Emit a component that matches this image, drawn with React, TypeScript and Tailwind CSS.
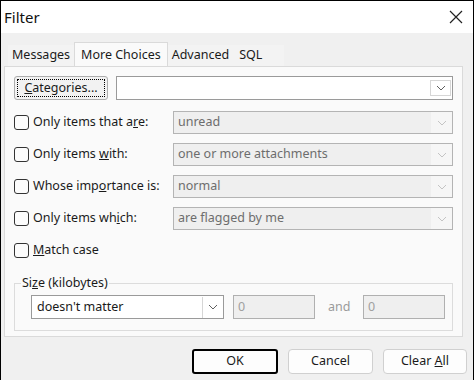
import type { ReactNode } from 'react';

const FONT = { fontFamily: '"Noto Sans", "Open Sans", Arial, sans-serif' };

function Chevron({ light = false }: { light?: boolean }) {
  return (
    <svg width="10" height="6" viewBox="0 0 10 6" fill="none">
      <path d="M1 1l4 4 4-4" stroke={light ? '#c4c4c4' : '#606060'} strokeWidth="1" />
    </svg>
  );
}

function Checkbox() {
  return <span className="h-[15px] w-[15px] shrink-0 rounded-[3px] border border-[#333] bg-[#fcfcfc]" />;
}

function DisabledSelect({ value }: { value: string }) {
  return (
    <div className="flex h-[23px] flex-1 items-center border border-[#b4b4b4] bg-[#efefef] pl-[4px] text-[#6d6d6d]">
      <span className="flex-1">{value}</span>
      <span className="flex h-[21px] w-[21px] items-center justify-center bg-[#f6f6f6]">
        <Chevron light />
      </span>
    </div>
  );
}

function CheckRow({ label, value }: { label: ReactNode; value: string }) {
  return (
    <div className="flex h-[23px] items-center">
      <div className="flex w-[159px] items-center gap-[4px]">
        <Checkbox />
        <span className="text-[#1a1a1a]">{label}</span>
      </div>
      <DisabledSelect value={value} />
    </div>
  );
}

function Tab({ children, selected = false, extra = '' }: { children: ReactNode; selected?: boolean; extra?: string }) {
  return selected ? (
    <div className="-mb-px flex h-[25px] items-center border border-b-0 border-[#dadada] bg-[#fafafa] px-[6px] text-[#1a1a1a]">
      {children}
    </div>
  ) : (
    <div className={`flex h-[21px] items-center bg-[#f3f3f3] pl-[4px] text-[#1a1a1a] ${extra}`}>{children}</div>
  );
}

export default function App() {
  return (
    <div
      className="flex h-[380px] w-[474px] flex-col overflow-hidden border-x border-t border-black bg-[#f0f0f0] text-[12.5px]"
      style={FONT}
    >
      <div className="flex h-[32px] shrink-0 items-center justify-between bg-white pl-[3px] pr-[10px]">
        <span className="text-[15px] text-[#111]">Filter</span>
        <svg width="14" height="14" viewBox="0 0 14 14">
          <path d="M1 1l12 12M13 1L1 13" stroke="#222" strokeWidth="1.2" />
        </svg>
      </div>

      <div className="flex items-end pl-[7px] pt-[9px]">
        <Tab extra="pr-[4px]">Messages</Tab>
        <Tab selected>More Choices</Tab>
        <Tab extra="pr-[6px]">Advanced</Tab>
        <Tab extra="pr-[22px]">SQL</Tab>
      </div>

      <div className="ml-[3px] mr-[10px] flex h-[271px] flex-col border border-[#dadada] bg-[#fafafa] px-[9px] pt-[9px]">
        <div className="flex h-[24px] items-center gap-[8px]">
          <button className="flex h-[24px] w-[94px] items-center justify-center rounded-[3px] border border-[#adadad] bg-[#f2f2f2] p-[2px] text-[#1a1a1a]">
            <span className="flex h-full w-full items-center justify-center border border-dotted border-black">
              <span>
                <u>C</u>ategories...
              </span>
            </span>
          </button>
          <div className="flex h-[24px] flex-1 items-center justify-end border border-[#9a9a9a] bg-white pr-[1px]">
            <span className="flex h-[16px] w-[21px] items-center justify-center border border-[#d6d6d6]">
              <Chevron />
            </span>
          </div>
        </div>

        <div className="mt-[11px] flex flex-col gap-[9px]">
          <CheckRow
            label={
              <>
                Only items that a<u>r</u>e:
              </>
            }
            value="unread"
          />
          <CheckRow
            label={
              <>
                Only items <u>w</u>ith:
              </>
            }
            value="one or more attachments"
          />
          <CheckRow
            label={
              <>
                Whose imp<u>o</u>rtance is:
              </>
            }
            value="normal"
          />
          <CheckRow
            label={
              <>
                Only items wh<u>i</u>ch:
              </>
            }
            value="are flagged by me"
          />
          <div className="flex h-[23px] items-center gap-[4px]">
            <Checkbox />
            <span className="text-[#1a1a1a]">
              <u>M</u>atch case
            </span>
          </div>
        </div>

        <div className="relative mt-[21px] h-[48px] border border-[#dcdcdc]">
          <span className="absolute -top-[9px] left-[6px] bg-[#fafafa] px-[1px] leading-[16px] text-[#1a1a1a]">
            Si<u>z</u>e (kilobytes)
          </span>
          <div className="flex items-center pl-[16px] pt-[11px]">
            <div className="flex h-[24px] w-[193px] items-center border border-[#9a9a9a] bg-white pl-[5px] pr-[1px] text-[#1a1a1a]">
              <span className="flex-1">doesn't matter</span>
              <span className="flex h-[21px] w-[20px] items-center justify-center border-l border-[#d6d6d6]">
                <Chevron />
              </span>
            </div>
            <div className="ml-[9px] flex h-[24px] w-[82px] items-center border border-[#b0b0b0] bg-[#efefef] pl-[4px] text-[#a0a0a0]">
              0
            </div>
            <span className="ml-[13px] w-[35px] text-[#9a9a9a]">and</span>
            <div className="flex h-[24px] w-[82px] items-center border border-[#b0b0b0] bg-[#efefef] pl-[4px] text-[#a0a0a0]">
              0
            </div>
          </div>
        </div>
      </div>

      <div className="flex justify-end gap-[10px] pr-[6px] pt-[12px]">
        <button className="h-[25px] w-[86px] rounded-[3px] border-2 border-black bg-[#fdfdfd] text-[#1a1a1a]">OK</button>
        <button className="h-[25px] w-[85px] rounded-[4px] border border-[#d0d0d0] bg-[#fdfdfd] text-[#1a1a1a]">
          Cancel
        </button>
        <button className="h-[25px] w-[84px] rounded-[4px] border border-[#d0d0d0] bg-[#fdfdfd] text-[#1a1a1a]">
          Clear <u>A</u>ll
        </button>
      </div>
    </div>
  );
}
